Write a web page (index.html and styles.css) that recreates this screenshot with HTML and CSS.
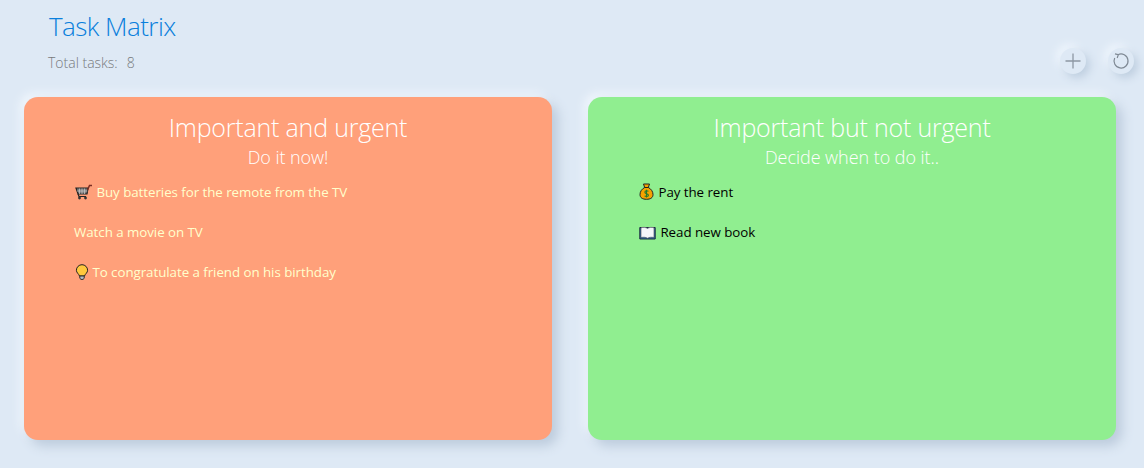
FILE: index.html
```html
<!DOCTYPE html>
<html>

<head>
	<title>Task Matrix</title>
	<link rel="stylesheet" href="styles.css">
</head>

<body>
	<div class="header">
		<div class="heading">
			<h1 class="title">Task Matrix</h1>
			<div class="total"><span>Total tasks:</span><span>8</span></div>
		</div>
		<div class="actions">
			<button class="roundbutton" type="button" aria-label="Add">
				<svg width="18" height="18" viewBox="0 0 18 18"><path d="M9 1.5V16.500M1.500 9H16.500" fill="none" stroke="#8d97a3" stroke-width="1.300"/></svg>
			</button>
			<button class="roundbutton" type="button" aria-label="Refresh">
				<svg width="18" height="18" viewBox="0 0 18 18"><path d="M6 2.700A7 7 0 1 1 2.700 6" fill="none" stroke="#7f8994" stroke-width="1.200"/><path d="M3 1.800L6.300 2.700L5.200 6" fill="none" stroke="#7f8994" stroke-width="1.200"/></svg>
			</button>
		</div>
	</div>

	<div class="matrix">
		<div class="quadrant urgent">
			<h2 class="quadrant-title">Important and urgent</h2>
			<div class="quadrant-sub">Do it now!</div>
			<ul class="tasks">
				<li class="task">
					<svg class="emoji" width="18" height="16" viewBox="0 0 18 16"><path d="M1 4H13L12 10H3Z" fill="#7a7a7a" stroke="#222" stroke-width="1.200"/><path d="M4.500 4.500V10M7 4.500V10M9.500 4.500V10M2 7H12.500" stroke="#ccc" stroke-width=".7"/><path d="M12.500 6L14.500 1.500H17" fill="none" stroke="#7a2c22" stroke-width="1.500"/><path d="M3 10L4 12.500H11" fill="none" stroke="#222" stroke-width="1.200"/><circle cx="4.500" cy="14" r="1.400" fill="#333"/><circle cx="10.500" cy="14" r="1.400" fill="#333"/></svg>
					Buy batteries for the remote from the TV
				</li>
				<li class="task">Watch a movie on TV</li>
				<li class="task">
					<svg class="emoji" width="14" height="16" viewBox="0 0 14 16"><path d="M7 .7A5.600 5.600 0 0 0 1.400 6.300C1.400 8.800 3.800 9.800 4.500 12H9.500C10.200 9.800 12.600 8.800 12.600 6.300A5.600 5.600 0 0 0 7 .7Z" fill="#ffc83d" stroke="#222" stroke-width="1"/><path d="M4.800 12H9.200V14.300L8 15.400H6L4.800 14.300Z" fill="#b5bcc4" stroke="#222" stroke-width=".9"/></svg>
					To congratulate a friend on his birthday
				</li>
			</ul>
		</div>

		<div class="quadrant planned">
			<h2 class="quadrant-title">Important but not urgent</h2>
			<div class="quadrant-sub">Decide when to do it..</div>
			<ul class="tasks">
				<li class="task">
					<svg class="emoji" width="16" height="17" viewBox="0 0 16 17"><path d="M4.500 1H10.500L9.300 4.500C12 5.800 14 8.500 14 11.500C14 14.800 11.500 16.300 7.500 16.300C3.500 16.300 1 14.800 1 11.500C1 8.500 3 5.800 5.700 4.500Z" fill="#f5a300" stroke="#222" stroke-width="1"/><path d="M5.500 4.500H9.500" stroke="#222" stroke-width="1"/><path d="M9.400 8.300C8.500 7.500 5.900 7.500 5.900 9.200C5.900 11 9.400 10.300 9.400 12.200C9.400 13.800 6.700 13.800 5.600 12.900M7.500 6.800V14.500" fill="none" stroke="#1f7a2e" stroke-width="1.100"/></svg>
					Pay the rent
				</li>
				<li class="task">
					<svg class="emoji" width="18" height="14" viewBox="0 0 18 14"><path d="M.8 1.500H16.200V13H.8Z" fill="#2f6fa8" stroke="#1c2c3c" stroke-width="1"/><path d="M2 1.800C4.500 1 7 1.300 8.500 2.500C10 1.300 12.500 1 15 1.800V11.500C12.500 11 10 11.200 8.500 12.200C7 11.200 4.500 11 2 11.500Z" fill="#f4f6fa" stroke="#445" stroke-width=".6"/></svg>
					Read new book
				</li>
			</ul>
		</div>
	</div>
</body>
</html>
```

FILE: styles.css
```css
html, body {
	margin: 0;
	height: 100%;
}

body {
	height: 468px;
	box-sizing: border-box;
	overflow: hidden;
	background-color: #dee9f5;
	font-family: "Open Sans", sans-serif;
	padding: 0 10px 28px 24px;
	display: flex;
	flex-direction: column;
}

.header {
	height: 97px;
	flex: none;
	display: flex;
	justify-content: space-between;
}

.heading {
	padding: 9px 0 0 24px;
}

.title {
	margin: 0 0 0 1px;
	font-size: 26px;
	line-height: 34px;
	font-weight: 300;
	color: #0a7fdc;
	letter-spacing: -0.55px;
}

.total {
	margin-top: 10px;
	display: flex;
	gap: 9px;
	font-size: 14px;
	line-height: 20px;
	font-weight: 300;
	color: #77797c;
}

.actions {
	display: flex;
	gap: 22px;
	padding-top: 48px;
	align-items: flex-start;
}

.roundbutton {
	width: 26px;
	height: 26px;
	padding: 0;
	border: 0;
	border-radius: 50%;
	background-color: #dee9f5;
	box-shadow: 4px 4px 8px #bfcfe0, -4px -4px 8px #eef5fc;
	display: flex;
	align-items: center;
	justify-content: center;
}

.matrix {
	flex: 1;
	width: 1092px;
	display: grid;
	grid-template-columns: 528px 528px;
	gap: 36px;
}

.quadrant {
	border-radius: 14px;
	box-shadow: 6px 6px 12px #bccbdc, -4px -4px 10px #f0f6fc;
	padding-top: 13px;
	text-align: center;
	color: #ffffff;
}

.urgent {
	background-color: #ffa07a;
}

.planned {
	background-color: #90ee90;
}

.quadrant-title {
	margin: 0 0 1px;
	font-size: 25px;
	line-height: 34px;
	font-weight: 300;
	letter-spacing: -0.2px;
}

.quadrant-sub {
	font-size: 18px;
	line-height: 24px;
	font-weight: 300;
	letter-spacing: -0.05px;
}

.tasks {
	list-style: none;
	margin: 0;
	padding: 13px 0 0 50px;
	text-align: left;
}

.task {
	height: 40px;
	font-size: 13.33px;
	line-height: 20px;
	letter-spacing: -0.05px;
	color: #ffffcc;
}

.planned .task {
	color: #000000;
}

.emoji {
	vertical-align: -3px;
	margin-left: 1px;
}
```
